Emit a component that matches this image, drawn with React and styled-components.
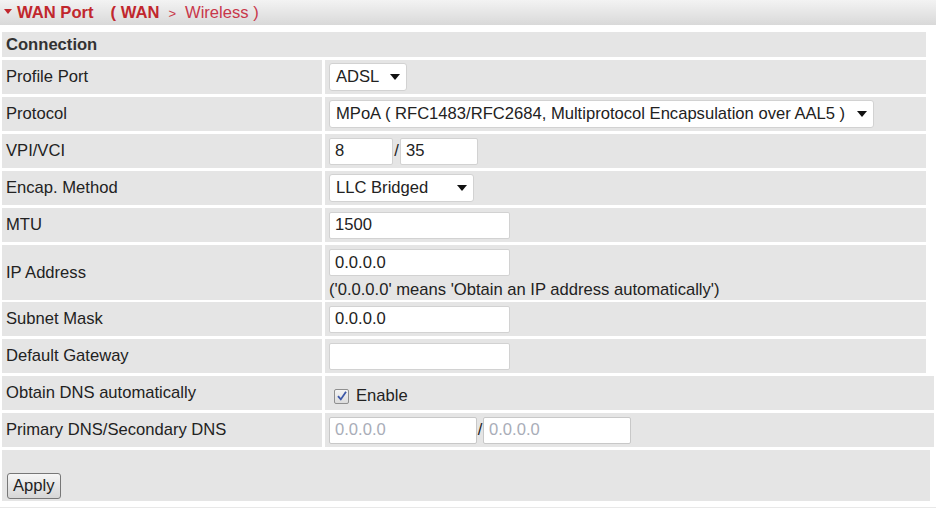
import React from 'react'
import styled, { createGlobalStyle } from 'styled-components'

const GlobalStyle = createGlobalStyle`
  html, body {
    margin: 0;
    padding: 0;
    background: #fff;
  }
  body {
    font-family: 'Liberation Sans', Arial, Helvetica, sans-serif;
    font-size: 16.6px;
    color: #222;
  }
`

const App = () => {
  return (
    <Page>
      <GlobalStyle />
      <Header>
        <Caret />
        <Title>WAN Port</Title>
        <Crumbs>
          <strong>( WAN</strong>
          <Sep>&gt;</Sep>
          Wireless )
        </Crumbs>
      </Header>

      <Form>
        <Section>Connection</Section>

        <Row>
          <Label>Profile Port</Label>
          <Value>
            <Select $width={78}>ADSL</Select>
          </Value>
        </Row>

        <Row>
          <Label>Protocol</Label>
          <Value>
            <Select $width={545}>
              MPoA ( RFC1483/RFC2684, Multiprotocol Encapsulation over AAL5 )
            </Select>
          </Value>
        </Row>

        <Row>
          <Label>VPI/VCI</Label>
          <Value>
            <Input $width={64} defaultValue='8' />
            <Slash>/</Slash>
            <Input $width={78} defaultValue='35' />
          </Value>
        </Row>

        <Row>
          <Label>Encap. Method</Label>
          <Value>
            <Select $width={145}>LLC Bridged</Select>
          </Value>
        </Row>

        <Row>
          <Label>MTU</Label>
          <Value>
            <Input $width={181} defaultValue='1500' />
          </Value>
        </Row>

        <Row $tall>
          <Label>IP Address</Label>
          <Value $stack>
            <Input $width={181} defaultValue='0.0.0.0' />
            <Note>('0.0.0.0' means 'Obtain an IP address automatically')</Note>
          </Value>
        </Row>

        <Row>
          <Label>Subnet Mask</Label>
          <Value>
            <Input $width={181} defaultValue='0.0.0.0' />
          </Value>
        </Row>

        <Row>
          <Label>Default Gateway</Label>
          <Value>
            <Input $width={181} defaultValue='' />
          </Value>
        </Row>

        <Row $wide>
          <Label>Obtain DNS automatically</Label>
          <Value>
            <Check>
              <CheckBox>
                <svg width='12' height='12' viewBox='0 0 12 12'>
                  <path
                    d='M2 6.2 L4.8 9.4 L10 1.8'
                    fill='none'
                    stroke='#3d58a8'
                    strokeWidth='1.8'
                  />
                </svg>
              </CheckBox>
              Enable
            </Check>
          </Value>
        </Row>

        <Row $wide>
          <Label>Primary DNS/Secondary DNS</Label>
          <Value>
            <Input $width={148} defaultValue='0.0.0.0' disabled />
            <Slash $narrow>/</Slash>
            <Input $width={148} defaultValue='0.0.0.0' disabled />
          </Value>
        </Row>

        <Actions>
          <Button>Apply</Button>
        </Actions>
      </Form>
      <Rule />
    </Page>
  )
}

export default App

const Page = styled.div`
  width: 936px;
  height: 508px;
  overflow: hidden;
`
const Header = styled.div`
  height: 25px;
  display: flex;
  align-items: center;
  padding-left: 4px;
  background: linear-gradient(#f3f3f3, #d9d9d9);
  color: #c1272d;
`
const Caret = styled.span`
  width: 0;
  height: 0;
  border-left: 4px solid transparent;
  border-right: 4px solid transparent;
  border-top: 5px solid #c1272d;
  margin: 0 5px 3px 0;
`
const Title = styled.span`
  font-weight: bold;
`
const Crumbs = styled.span`
  margin-left: 17px;
  color: #c8374a;
  strong {
    color: #c1272d;
  }
`
const Sep = styled.span`
  font-size: 13px;
  margin: 0 9px;
`
const Form = styled.div`
  margin-top: 7px;
  padding-left: 2px;
  display: flex;
  flex-direction: column;
  gap: 3px;
`
const Section = styled.div`
  width: 920px;
  height: 25px;
  padding-left: 4px;
  display: flex;
  align-items: center;
  background: #e5e5e5;
  font-weight: bold;
  color: #333;
`
const Row = styled.div`
  width: ${(p) => (p.$wide ? '932px' : '924px')};
  height: ${(p) => (p.$tall ? '54px' : '34px')};
  display: grid;
  grid-template-columns: 320px 1fr;
  column-gap: 3px;
`
const Label = styled.div`
  background: #e5e5e5;
  padding-left: 4px;
  display: flex;
  align-items: center;
`
const Value = styled.div`
  background: #e5e5e5;
  padding: ${(p) => (p.$stack ? '4px 4px 0' : '0 4px')};
  display: flex;
  flex-direction: ${(p) => (p.$stack ? 'column' : 'row')};
  align-items: ${(p) => (p.$stack ? 'flex-start' : 'center')};
`
const Input = styled.input`
  box-sizing: border-box;
  width: ${(p) => p.$width}px;
  height: 27px;
  padding: 0 5px;
  border: 1px solid #d2d2d2;
  border-radius: 2px;
  background: #fff;
  font-family: inherit;
  font-size: 16.6px;
  color: #222;
  outline: none;
  &:disabled {
    color: #a9adb8;
    border-color: #c8c8c8;
    background: #fff;
  }
`
const Slash = styled.span`
  width: ${(p) => (p.$narrow ? '6px' : '7px')};
  text-align: center;
`
const Select = styled.div`
  box-sizing: border-box;
  width: ${(p) => p.$width}px;
  height: 28px;
  padding: 0 6px;
  border: 1px solid #d2d2d2;
  border-radius: 3px;
  background: #fff;
  display: flex;
  align-items: center;
  justify-content: space-between;
  white-space: nowrap;
  &::after {
    content: '';
    border-left: 5px solid transparent;
    border-right: 5px solid transparent;
    border-top: 6px solid #111;
    margin-left: 8px;
  }
`
const Note = styled.div`
  margin-top: 4px;
`
const Check = styled.label`
  display: flex;
  align-items: center;
  gap: 7px;
  margin: 6px 0 0 5px;
`
const CheckBox = styled.span`
  box-sizing: border-box;
  width: 15px;
  height: 15px;
  border: 1px solid #8f8f8f;
  border-radius: 2px;
  background: linear-gradient(#f4f4f4, #dcdcdc);
  display: flex;
  align-items: center;
  justify-content: center;
`
const Actions = styled.div`
  width: 920px;
  height: 49px;
  padding: 0 4px 2px;
  background: #e5e5e5;
  display: flex;
  align-items: flex-end;
`
const Button = styled.button`
  height: 26px;
  padding: 0 5px;
  margin-left: 1px;
  border: 1px solid #777;
  border-radius: 3px;
  background: linear-gradient(#f6f6f6, #d6d6d6);
  font-family: inherit;
  font-size: 16.6px;
  color: #222;
`
const Rule = styled.div`
  margin-top: 6px;
  height: 2px;
  background: #e8e8e8;
`
